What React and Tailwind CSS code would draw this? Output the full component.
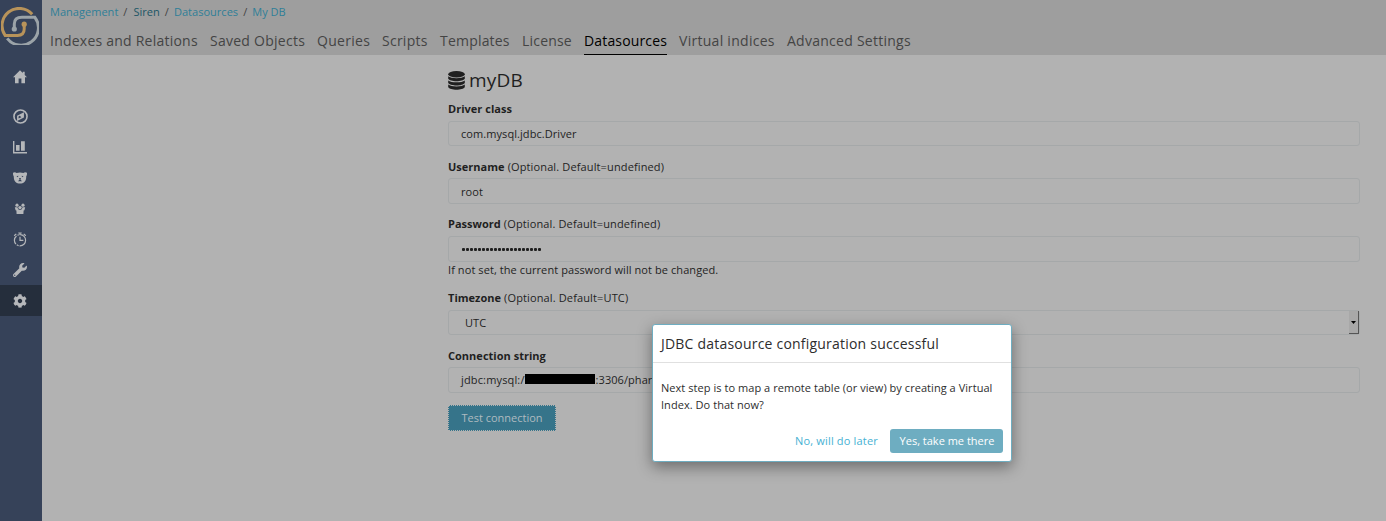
import React from "react";
import { FaWrench, FaCog } from "react-icons/fa";

const tabs = [
  ["Indexes and Relations", "w-[148px] tracking-[0.23px]"],
  ["Saved Objects", "w-[95px] tracking-[0.26px]"],
  ["Queries", "w-[53px] tracking-[0.3px]"],
  ["Scripts", "w-[46px] tracking-[0.25px]"],
  ["Templates", "w-[70px] tracking-[0.2px]"],
  ["License", "w-[50px] tracking-[0.2px]"],
  ["Datasources", "w-[83px] tracking-[0.15px]"],
  ["Virtual indices", "w-[96px] tracking-[0.28px]"],
  ["Advanced Settings", "w-[124px] tracking-[0.26px]"],
];

function Logo() {
  return (
    <svg width="38" height="38" viewBox="0 0 38 38" fill="none" className="mt-[7px] ml-[1px]">
      <path d="M31.2 7.3A17.2 17.2 0 0 0 4.1 28.4H16.5C21.2 28.4 23.2 25.5 23.2 22V17" stroke="#b8935a" strokeWidth="3" />
      <path d="M6.2 31.3A17.2 17.2 0 0 0 33.9 10.3H21C15.5 10.3 13.3 12.7 13.3 17V22" stroke="#9ba3a8" strokeWidth="3" />
      <circle cx="23.2" cy="17.2" r="2.6" fill="#b8935a" />
      <circle cx="13.3" cy="22" r="2.6" fill="#9ba3a8" />
    </svg>
  );
}

const HomeIcon = () => (
  <svg width="14" height="14" viewBox="0 0 14 14" fill="currentColor">
    <path d="M7 .3 0 7.2h2V13.3h3.6V8.5h2.8v4.8H12V7.2h2L11.7 4.9V1.7H9.8V3z" />
  </svg>
);
const CompassIcon = () => (
  <svg width="15" height="15" viewBox="0 0 14 14" fill="none">
    <circle cx="7" cy="7" r="6.1" stroke="currentColor" strokeWidth="1.5" />
    <path fillRule="evenodd" fill="currentColor" d="M10.2 3.1V8L3.8 11.1V6.2zM5.2 8.9 7.8 7.6 6.3 6.3 5.2 6.9z" />
  </svg>
);
const ChartIcon = () => (
  <svg width="14" height="14" viewBox="0 0 14 14" fill="currentColor">
    <path d="M0 1h1.4v11H14v1.4H0zM3 5h3.6v5.8H3zM8 1.2h3.8v9.6H8z" />
  </svg>
);
const BearIcon = () => (
  <svg width="14" height="12" viewBox="0 0 14 12">
    <path fill="currentColor" d="M0 .8C1.5-.1 2.6.2 3.5 1Q7-.2 10.5 1C11.4.2 12.5-.1 14 .8 14.2 2.7 13.6 3.8 13.2 4.5 13.4 9.3 10.6 11.6 7 11.6S.6 9.3.8 4.5C.4 3.8-.2 2.7 0 .8z" />
    <path fill="#364259" d="M3.4 4.2 5.3 3.8 5 5.3zM10.6 4.2 8.7 3.8 9 5.3zM6 6h2L7.4 7.5 9 9.2H5L6.6 7.5z" />
  </svg>
);
const GroupIcon = () => (
  <svg width="12" height="12" viewBox="0 0 12 12" fill="currentColor">
    <circle cx="3" cy="2.2" r="1.6" />
    <circle cx="9" cy="2.2" r="1.6" />
    <path d="M.8 4.2H3.4L4.2 6.2 6 7 7.8 6.2 8.6 4.2H11.2L10.4 7.2 9.6 7.6 9.4 11H2.6L2.4 7.6 1.6 7.2z" />
    <circle cx="6" cy="4.6" r="1.7" />
  </svg>
);
const ClockIcon = () => (
  <svg width="14" height="15" viewBox="0 0 14 15" fill="none" stroke="currentColor">
    <circle cx="7" cy="8.3" r="5.6" strokeWidth="1.2" strokeDasharray="9 1 2 1" />
    <path d="M7 4.8V8.3h3.4M5.3 1h3.4M7 1v2M1.2 3.8 3.3 1.9M10.7 1.9l2.1 1.9" strokeWidth="1.2" />
  </svg>
);
const DatabaseIcon = () => (
  <svg width="17" height="19" viewBox="0 0 17 19" fill="currentColor">
    <ellipse cx="8.5" cy="3.2" rx="8.3" ry="3.2" />
    <path d="M.2 5.2C3 7.8 14 7.8 16.8 5.2V7.7C15 11 2 11 .2 7.7zM.2 9.4C3 12 14 12 16.8 9.4V11.9C15 15.2 2 15.2 .2 11.9zM.2 13.6C3 16.2 14 16.2 16.8 13.6V16C15 19.6 2 19.6.2 16z" />
  </svg>
);

const navItems = [
  [HomeIcon, "h-[32px] mb-[8px]"],
  [CompassIcon, "h-[31px]"],
  [ChartIcon, "h-[30px]"],
  [BearIcon, "h-[31px]"],
  [GroupIcon, "h-[31px]"],
  [ClockIcon, "h-[30px]"],
  [FaWrench, "h-[31px]"],
  [FaCog, "h-[31px] bg-[#252e3c]"],
];

function Sidebar() {
  return (
    <aside className="flex h-full w-[42px] shrink-0 flex-col bg-[#364259] text-[#b5b7ba]">
      <div className="h-[61px]"><Logo /></div>
      {navItems.map(([Icon, cls], i) => (
        <div key={i} className={"flex shrink-0 items-center justify-center pr-[2px] text-[14px] " + cls}>
          <Icon />
        </div>
      ))}
    </aside>
  );
}

function Header() {
  return (
    <header className="h-[55px] bg-[#9e9e9e] pl-[8px]">
      <div className="flex h-[24px] items-center gap-[5px] text-[11px] tracking-[0.03px] text-[#2f7f98]">
        <a>Management</a>
        <span className="text-[#444]">/</span>
        <a className="ml-[1px] text-[#205666]">Siren</a>
        <span className="text-[#444]">/</span>
        <a>Datasources</a>
        <span className="text-[#444]">/</span>
        <a>My DB</a>
      </div>
      <nav className="flex h-[31px] gap-[12px] text-[14px] leading-[34px] text-[#444]">
        {tabs.map(([name, cls]) => (
          <a
            key={name}
            className={"h-[31px] shrink-0 whitespace-nowrap " + cls + (name === "Datasources" ? " border-b border-black text-black" : "")}
          >
            {name}
          </a>
        ))}
      </nav>
    </header>
  );
}

function Field({ label, note, className, labelClass = "h-[20px]", inputClass, children }) {
  return (
    <div className={"flex flex-col " + className}>
      <label className={"leading-[16px] tracking-[0.13px] " + labelClass}>
        <b className="font-bold tracking-[0.02px]">{label}</b> {note}
      </label>
      <div className={"flex w-[912px] items-center rounded-[3px] border border-[#a5a8a9] pl-[12px] tracking-[0.07px] " + inputClass}>{children}</div>
    </div>
  );
}

function Dialog() {
  return (
    <section className="absolute top-[324px] left-[652px] flex h-[138px] w-[360px] flex-col rounded-[3px] border border-[#6eadc1] bg-white text-[#2d2d2d] shadow-[0_5px_15px_rgba(0,0,0,0.4)]">
      <h2 className="h-[38px] border-b border-[#e0e0e0] pl-[8px] text-[14px] leading-[38px] tracking-[0.21px]">JDBC datasource configuration successful</h2>
      <p className="h-[66px] pt-[16px] pl-[8px] text-[11px] leading-[17px] tracking-[0.05px]">
        Next step is to map a remote table (or view) by creating a Virtual
        <br />
        Index. Do that now?
      </p>
      <div className="flex items-center justify-end pr-[8px] text-[11px]">
        <button className="mr-[12px] tracking-[0.18px] text-[#46b1d3]">No, will do later</button>
        <button className="h-[24px] w-[113px] rounded-[3px] bg-[#6eadc1] pl-[1px] text-white">Yes, take me there</button>
      </div>
    </section>
  );
}

export default function App() {
  return (
    <div className="relative flex h-[521px] w-[1386px] overflow-hidden bg-[#b2b2b2] font-['Open_Sans',sans-serif] text-[11px] text-[#1f1f1f]">
      <Sidebar />
      <div className="flex flex-1 flex-col">
        <Header />
        <main className="pl-[406px]">
          <h1 className="flex h-[46px] items-center gap-[4px] pt-[4px] text-[19px] tracking-[0.2px]">
            <DatabaseIcon />
            myDB
          </h1>
          <Field label="Driver class" className="h-[58px]" inputClass="h-[25px] pt-[1px]">com.mysql.jdbc.Driver</Field>
          <Field label="Username" note="(Optional. Default=undefined)" className="h-[57px]" labelClass="h-[19px]" inputClass="h-[26px] pt-[2px]">root</Field>
          <Field label="Password" note="(Optional. Default=undefined)" className="h-[46px]" inputClass="h-[26px]">
            <span className="flex gap-[1px] pl-[1px]">
              {Array.from({ length: 20 }, (_, i) => (
                <i key={i} className="h-[3px] w-[3px] rounded-[1px] bg-[#1f1f1f]" />
              ))}
            </span>
          </Field>
          <div className="h-[28px] leading-[16px] tracking-[0.08px]">If not set, the current password will not be changed.</div>
          <Field label="Timezone" note="(Optional. Default=UTC)" className="h-[58px]" inputClass="h-[25px]">
            <span className="ml-[4px] flex-1 pt-[1px]">UTC</span>
            <span className="flex h-[23px] w-[10px] items-center justify-center border-r border-b border-[#555] bg-[#a8a8a8]">
              <svg width="5" height="3" viewBox="0 0 5 3"><path d="M0 0h5L2.5 3z" /></svg>
            </span>
          </Field>
          <Field label="Connection string" className="h-[57px]" labelClass="h-[19px]" inputClass="h-[26px]">
            <span className="tracking-[0.15px]">jdbc:mysql:/</span>
            <span className="-mt-[2px] h-[10px] w-[70px] bg-black" />
            <span className="ml-[1px]">:3306/pharma</span>
          </Field>
          <button className="h-[26px] w-[108px] border border-dotted border-[#b2b2b2] bg-[#36748a] text-[#aebbc0]">Test connection</button>
        </main>
      </div>
      <Dialog />
    </div>
  );
}
